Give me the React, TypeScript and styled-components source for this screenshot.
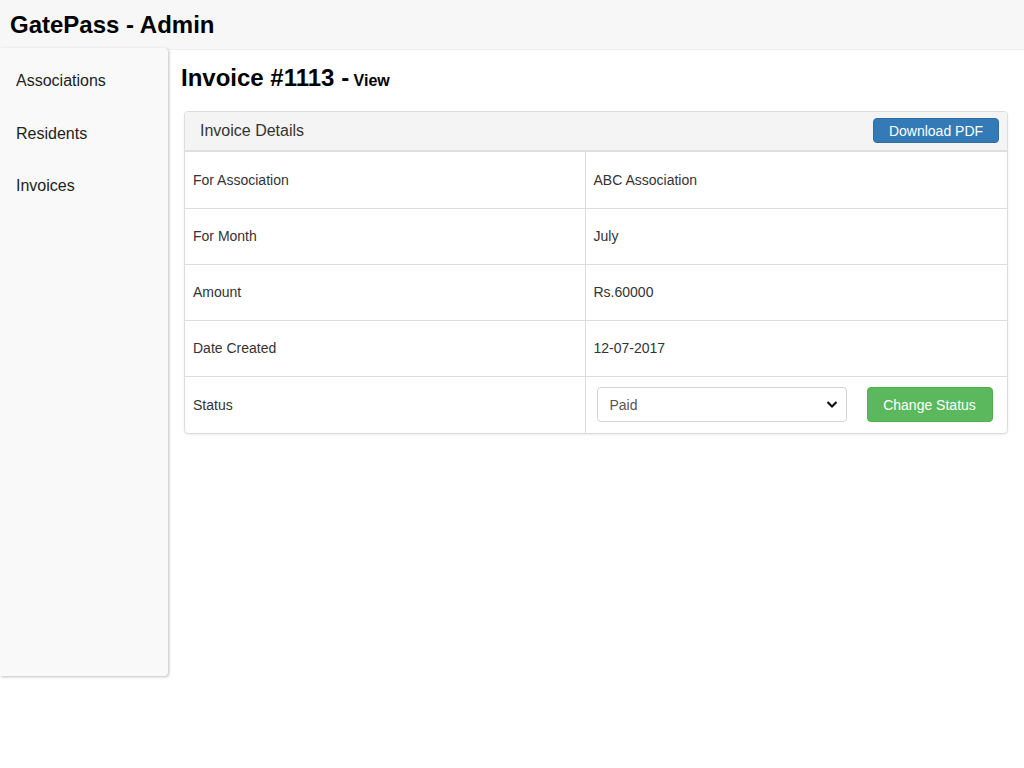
import React from 'react';
import styled, {createGlobalStyle} from 'styled-components';

const Global = createGlobalStyle`
  html, body {
    margin: 0;
    padding: 0;
    background: #fff;
    font-family: "Liberation Sans", Arial, sans-serif;
    color: #000;
  }
  * { box-sizing: border-box; }
`;

const Page = styled.div`
  width: 1024px;
  min-height: 768px;
`;

const TopBar = styled.header`
  height: 50px;
  background: #f7f7f7;
  border-bottom: 1px solid #ececec;
  display: flex;
  align-items: center;
  padding: 0 10px;
`;

const Brand = styled.h1`
  margin: 0;
  font-size: 24px;
  font-weight: bold;
`;

const Body = styled.div`
  display: flex;
  align-items: flex-start;
  margin-top: -2px;
`;

const Sidebar = styled.nav`
  width: 168px;
  height: 628px;
  background: #f9f9f9;
  border-radius: 0 4px 4px 0;
  box-shadow: 1px 1px 3px rgba(0, 0, 0, 0.25);
  padding-top: 23px;
  display: flex;
  flex-direction: column;
`;

const NavItem = styled.a`
  font-size: 16px;
  color: #222;
  padding: 0 16px;
  height: 52.5px;
  line-height: 20px;
  text-decoration: none;
  cursor: pointer;
`;

const Main = styled.main`
  flex: 1;
  padding: 17px 16px 0 13px;
`;

const Title = styled.h2`
  margin: 0 0 17px;
  font-size: 24px;
  font-weight: bold;
  line-height: 26px;
  small {
    font-size: 16px;
  }
`;

const Panel = styled.section`
  margin-left: 3px;
  border: 1px solid #dcdcdc;
  border-radius: 4px;
  box-shadow: 0 1px 2px rgba(0, 0, 0, 0.08);
  overflow: hidden;
`;

const PanelHead = styled.div`
  height: 40px;
  background: #f4f4f4;
  border-bottom: 2px solid #dedede;
  display: flex;
  align-items: center;
  justify-content: space-between;
  padding: 0 8px 1px 15px;
  font-size: 16px;
  color: #333;
`;

const Btn = styled.button<{$tone: 'blue' | 'green'}>`
  font-family: inherit;
  color: #fff;
  border-radius: 4px;
  cursor: pointer;
  background: ${p => (p.$tone === 'blue' ? '#337ab7' : '#5cb85c')};
  border: 1px solid ${p => (p.$tone === 'blue' ? '#2e6da4' : '#4cae4c')};
  font-size: 14px;
  height: ${p => (p.$tone === 'blue' ? '25px' : '35px')};
  width: 126px;
  padding: 0;
`;

const Table = styled.table`
  width: 100%;
  table-layout: fixed;
  border-collapse: collapse;
  font-size: 14px;
  color: #333;
`;

const Cell = styled.td`
  height: 56px;
  padding: 0 8px;
  vertical-align: middle;
  border-top: 1px solid #dddddd;
  &:first-child {
    width: 400px;
  }
  & + & {
    border-left: 1px solid #dddddd;
  }
  tr:first-child > & {
    border-top: none;
  }
  tr:last-child > & {
    height: 57px;
  }
`;

const StatusForm = styled.div`
  display: flex;
  align-items: center;
  gap: 20px;
  padding-left: 3px;
`;

const SelectWrap = styled.div`
  position: relative;
  width: 250px;
  height: 35px;
`;

const Select = styled.select`
  appearance: none;
  width: 100%;
  height: 100%;
  border: 1px solid #d4d4d4;
  border-radius: 4px;
  background: #fff;
  font-family: inherit;
  font-size: 14px;
  color: #555;
  padding: 0 12px;
`;

const Chevron = styled.svg`
  position: absolute;
  right: 9px;
  top: 13px;
  pointer-events: none;
`;

const rows: [string, string][] = [
  ['For Association', 'ABC Association'],
  ['For Month', 'July'],
  ['Amount', 'Rs.60000'],
  ['Date Created', '12-07-2017'],
];

export default function App() {
  return (
    <Page>
      <Global/>
      <TopBar>
        <Brand>GatePass - Admin</Brand>
      </TopBar>
      <Body>
        <Sidebar>
          <NavItem>Associations</NavItem>
          <NavItem>Residents</NavItem>
          <NavItem>Invoices</NavItem>
        </Sidebar>
        <Main>
          <Title>Invoice #1113 -<small> View</small></Title>
          <Panel>
            <PanelHead>
              <span>Invoice Details</span>
              <Btn $tone="blue">Download PDF</Btn>
            </PanelHead>
            <Table>
              <tbody>
                {rows.map(([k, v]) => (
                  <tr key={k}>
                    <Cell>{k}</Cell>
                    <Cell>{v}</Cell>
                  </tr>
                ))}
                <tr>
                  <Cell>Status</Cell>
                  <Cell>
                    <StatusForm>
                      <SelectWrap>
                        <Select defaultValue="paid">
                          <option value="paid">Paid</option>
                          <option value="unpaid">Unpaid</option>
                        </Select>
                        <Chevron width="12" height="9" viewBox="0 0 12 9">
                          <path d="M1.5 2 L6 6.5 L10.5 2" fill="none" stroke="#111" strokeWidth="2.2"/>
                        </Chevron>
                      </SelectWrap>
                      <Btn $tone="green">Change Status</Btn>
                    </StatusForm>
                  </Cell>
                </tr>
              </tbody>
            </Table>
          </Panel>
        </Main>
      </Body>
    </Page>
  );
}
